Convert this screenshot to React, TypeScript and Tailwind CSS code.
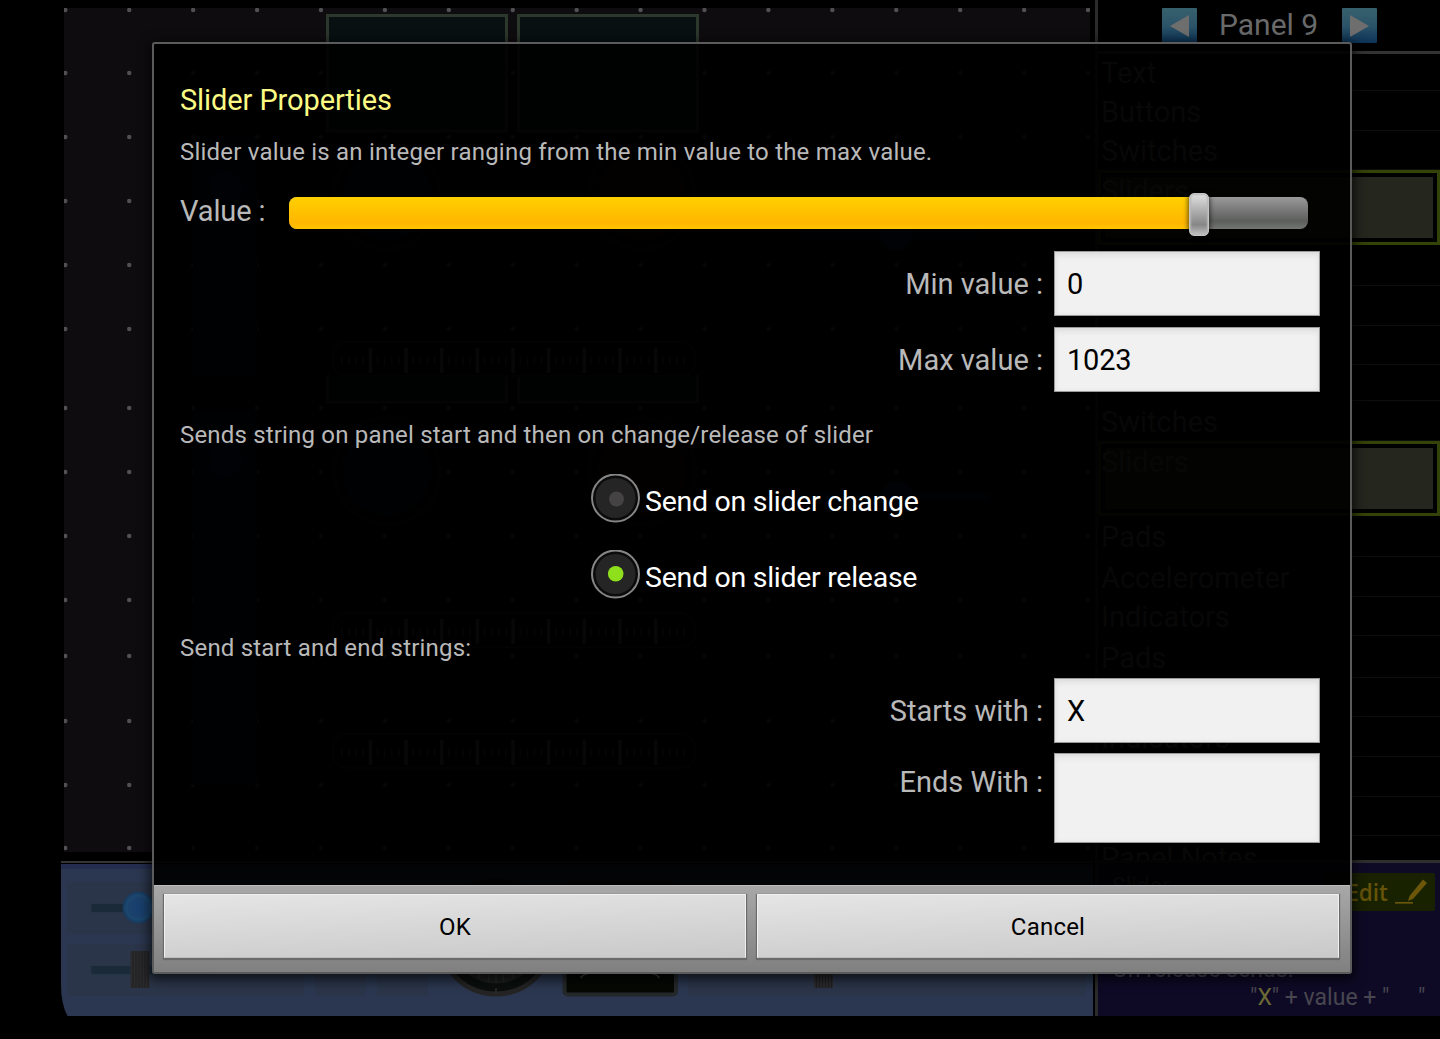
import React from "react";

const DOT_ROWS = [10, 73, 137, 201, 265, 329, 408, 472, 536, 600, 656, 721, 785, 848];
const DOT_COLS = Array.from({ length: 17 }, (_, i) => 65.3 + i * 63.92);

function Ruler({ y }: { y: number }) {
  return (
    <g>
      <rect x="333" y={y} width="362" height="34" rx="14" fill="#080808" stroke="#1c1c1c" strokeWidth="2" />
      {Array.from({ length: 49 }, (_, i) => i + 1).map((i) => {
        const tall = i % 5 === 0;
        return (
          <rect
            key={i}
            x={334.8 + i * 7.13 - (tall ? 1.7 : 0.8)}
            y={y + (tall ? 6 : 15)}
            width={tall ? 3.4 : 1.6}
            height={tall ? 25 : 8}
            fill={tall ? "#606060" : "#464646"}
          />
        );
      })}
    </g>
  );
}

function Knob({ cx, cy, color }: { cx: number; cy: number; color: string }) {
  return (
    <g>
      <circle cx={cx} cy={cy} r="53" fill="#0c0c0c" stroke="#181814" strokeWidth="3" />
      <circle cx={cx} cy={cy} r="44" fill={color} />
    </g>
  );
}

function PanelCanvas() {
  return (
    <svg className="block h-[844px] w-[1026px]" viewBox="64 8 1026 844">
      <rect x="64" y="8" width="1026" height="844" fill="#0f0c10" />
      {DOT_ROWS.map((y) => DOT_COLS.map((x) => <circle key={`${x}-${y}`} cx={x} cy={y} r="2.2" fill="#505052" />))}
      <g fill="#081012" stroke="#2d382d" strokeWidth="3">
        <rect x="327.5" y="15.5" width="179" height="115.5" />
        <rect x="518.5" y="15.5" width="179" height="115.5" />
        <rect x="327.5" y="360" width="179" height="42" />
        <rect x="518.5" y="360" width="179" height="42" />
      </g>
      <rect x="325" y="340" width="376" height="35" fill="#0a0a0a" />
      <g fill="#0c1624">
        <rect x="193" y="138" width="64" height="237" />
        <rect x="193" y="410" width="64" height="375" />
      </g>
      <g fill="#0a1826">
        <rect x="221" y="170" width="9" height="193" />
        <rect x="221" y="440" width="9" height="320" />
        <rect x="799" y="230" width="180" height="9" />
        <rect x="799" y="492" width="190" height="9" />
      </g>
      <g fill="#0c2440">
        <circle cx="226" cy="188" r="16" />
        <circle cx="226" cy="460" r="16" />
        <circle cx="896" cy="234" r="16" />
        <circle cx="897" cy="497" r="16" />
      </g>
      <Knob cx={387} cy={196} color="#081626" />
      <Knob cx={642} cy={196} color="#300a06" />
      <Knob cx={387} cy={471} color="#081626" />
      <Knob cx={642} cy={471} color="#300a06" />
      <Ruler y={342} />
      <Ruler y={613} />
      <Ruler y={734} />
    </svg>
  );
}

function WidgetTray() {
  return (
    <div className="h-[156px] w-[1032px] overflow-hidden">
      <svg className="block h-[156px] w-[1032px]" viewBox="61 860 1032 156">
        <defs>
          <radialGradient id="ball">
            <stop offset="0" stopColor="#183f70" />
            <stop offset="0.6" stopColor="#1b416c" />
            <stop offset="0.75" stopColor="#1c4870" />
            <stop offset="1" stopColor="#17385c" />
          </radialGradient>
        </defs>
        <path d="M61 864H1093V1016H67.500Q61 1004 61 985Z" fill="#2b3750" />
        <rect x="61" y="861" width="1032" height="2" fill="#353535" />
        <rect x="61" y="864" width="1032" height="5" fill="#252d4f" />
        <g fill="#2b3549">
          <rect x="67" y="882" width="237" height="52" />
          <rect x="67" y="944" width="237" height="52" />
          <rect x="315" y="944" width="51" height="52" />
          <rect x="377" y="944" width="51" height="52" />
          <rect x="688" y="944" width="398" height="52" />
        </g>
        <rect x="91" y="903.500" width="120" height="9" fill="#1b2a38" stroke="#253545" />
        <rect x="91" y="965.500" width="120" height="9" fill="#1b2a38" stroke="#253545" />
        <circle cx="138.500" cy="907.500" r="16" fill="url(#ball)" />
        {[130.5, 814].map((x) => (
          <g key={x}>
            <rect x={x} y="951" width="19" height="37" fill="#2b2b2e" />
            {[2, 5, 8, 11, 14, 17].map((d) => (
              <rect key={d} x={x + d} y="951" width="1" height="37" fill="#202022" />
            ))}
          </g>
        ))}
        <circle cx="496" cy="937.500" r="56.500" fill="#0a0f0e" stroke="#242424" strokeWidth="5" />
        <circle cx="496" cy="937.500" r="46" fill="#1b1c1c" />
        <path d="M496 988v5" stroke="#3a3a3a" />
        <path d="M482 970l-4 9M490 972l-2 10M496 973v10M502 972l2 10M510 970l4 9" stroke="#2c2c2c" />
        <rect x="564.500" y="884" width="111.500" height="110.500" rx="3" fill="#050803" stroke="#25282a" strokeWidth="4" />
        <path d="M580.500 978q3-4 8-4.500M659.500 978q-3-4-8-4.500" fill="none" stroke="#3a3e3c" strokeWidth="1.500" />
      </svg>
    </div>
  );
}

function ListRow({ label, className }: { label: string; className: string }) {
  return (
    <div
      className={`flex shrink-0 items-center border-b border-[#0e0e0e] pt-[3px] pl-[3px] text-[29px] leading-none text-[#5a5a5a] ${className}`}
    >
      {label}
    </div>
  );
}

function SelectedRow({ label }: { label: string }) {
  return (
    <div className="h-[75px] shrink-0 border-[3px] border-[#344307] bg-black p-[4px]">
      <div className="h-full bg-[#25271f] text-[29px] leading-[28px] text-[#5a5a5a]">
        <span className="-ml-[4px]">{label}</span>
      </div>
    </div>
  );
}

function Arrow({ left }: { left?: boolean }) {
  return (
    <div className="flex h-[35px] w-[35px] items-center justify-center rounded-[1px] bg-linear-to-b from-[#37606d] via-[#2c5469] to-[#0c3356]">
      <svg viewBox="0 0 19 22" className={left ? "h-[22px] w-[19px] rotate-180" : "h-[22px] w-[19px]"}>
        <path d="M0 0L19 11L0 22Z" fill="#6e6e6e" />
      </svg>
    </div>
  );
}

function Sidebar() {
  return (
    <div className="flex h-[1016px] w-[345px] shrink-0 flex-col border-l-[3px] border-[#2b2b2b]">
      <div className="flex h-[54px] shrink-0 items-start gap-[22px] border-b-[3px] border-[#333] pt-[8px] pl-[64px]">
        <Arrow left />
        <div className="w-[101px] text-[30px] leading-[34px] whitespace-nowrap text-[#6a6a6a]">Panel 9</div>
        <Arrow />
      </div>
      <div className="flex h-[806px] shrink-0 flex-col overflow-hidden">
        <ListRow label="Text" className="h-[37px]" />
        <ListRow label="Buttons" className="h-[40px]" />
        <ListRow label="Switches" className="h-[39px]" />
        <SelectedRow label="Sliders" />
        <ListRow label="" className="h-[41px]" />
        <ListRow label="" className="h-[40px]" />
        <ListRow label="" className="h-[39px]" />
        <ListRow label="" className="h-[36px]" />
        <ListRow label="Switches" className="h-[40px]" />
        <SelectedRow label="Sliders" />
        <ListRow label="Pads" className="h-[41px]" />
        <ListRow label="Accelerometer" className="h-[40px]" />
        <ListRow label="Indicators" className="h-[39px]" />
        <ListRow label="Pads" className="h-[42px]" />
        <ListRow label="" className="h-[39px]" />
        <ListRow label="Indicators" className="h-[40px]" />
        <ListRow label="" className="h-[40px]" />
        <ListRow label="" className="h-[39px]" />
        <ListRow label="Panel Notes" className="h-[42px]" />
      </div>
      <div className="flex min-h-0 flex-1 flex-col border-t-[3px] border-[#2e2e2e] bg-[#0e0a26]">
        <div className="flex justify-between pt-[10px] pr-[5px] pl-[14px]">
          <div className="text-[23px] leading-[28px] text-[#5a5a5a]">Slider</div>
          <div className="flex h-[38px] w-[110px] items-center gap-[7px] rounded-[2px] bg-[#182200] pl-[19px] font-['Open_Sans',sans-serif] text-[22.5px] leading-[38px] font-semibold text-[#665309]">
            <span className="w-[44px] pt-[2px] text-right">Edit</span>
            <svg viewBox="0 0 32 26" className="h-[26px] w-[32px]" fill="#6b5609">
              <rect x="0" y="23" width="18" height="1.600" />
              <path d="M28 0.500L32 4L18 20L13 22L14.500 17Z" />
            </svg>
          </div>
        </div>
        <div className="mt-[46px] pl-[14px] text-[23px] leading-[26px] text-[#48485a]">On release sends:</div>
        <div className="flex pt-[1px] pl-[152px] text-[23px] leading-[28px] whitespace-pre text-[#48464f]">
          "<span className="text-[#6c6a35]">X</span>" + value + "{"     "}"
        </div>
      </div>
    </div>
  );
}

function Field({ label, value, tall }: { label: string; value: string; tall?: boolean }) {
  return (
    <div className={tall ? "flex h-[90px] items-start" : "flex h-[65px] items-center"}>
      <div
        className={
          tall
            ? "flex-1 pt-[12px] pr-[11px] text-right text-[29px] leading-[34px]"
            : "flex-1 pt-[1px] pr-[11px] text-right text-[29px] leading-[34px]"
        }
      >
        {label}
      </div>
      <div className="flex h-full w-[266px] items-center border border-[#9a9a9a] bg-[#f1f1f1] pt-[2px] pl-[12px] text-[29px] tracking-[-0.2px] text-black shadow-[inset_0_5px_6px_-2px_#dcdcdc,inset_0_0_4px_#e2e2e2]">
        {value}
      </div>
    </div>
  );
}

function Radio({ label, checked }: { label: string; checked?: boolean }) {
  return (
    <div className="flex h-[50px] items-center pl-[411px]">
      <svg viewBox="0 0 50 50" className="h-[50px] w-[50px]">
        <circle cx="24.500" cy="24" r="23.500" fill="#0b0b0b" stroke="#868686" strokeWidth="2" />
        <circle cx="24.500" cy="24" r="20" fill="#262525" />
        {checked ? (
          <circle cx="24.700" cy="23.800" r="7.800" fill="#8fe01c" />
        ) : (
          <circle cx="25.500" cy="25" r="7.500" fill="#454343" />
        )}
      </svg>
      <div className="pt-[5px] pl-[4px] text-[28.5px] leading-[34px] tracking-[-0.28px] text-white">{label}</div>
    </div>
  );
}

function DialogButton({ label }: { label: string }) {
  return (
    <button className="h-[64px] w-[582px] border border-[#f0f0f0] border-b-[#bdbdbd] bg-linear-[178deg] from-[#e5e5e5] to-[#c9c9c9] pt-[2px] text-[24px] leading-none tracking-[0.2px] text-black shadow-[0_1px_1px_1px_#6a6a6a]">
      {label}
    </button>
  );
}

function Dialog() {
  return (
    <div className="absolute top-[42px] left-[152px] flex h-[932px] w-[1200px] flex-col rounded-[3px] border-2 border-[#5b5b5b] bg-black/92 text-[#b9b9b9] shadow-[0_3px_12px_3px_rgba(0,0,0,0.65)]">
      <div className="flex flex-1 flex-col pt-[36px] pr-[30px] pl-[26px]">
        <h1 className="text-[29px] leading-[40px] tracking-[-0.1px] text-[#fbfb84]">Slider Properties</h1>
        <p className="mt-[12px] text-[24px] leading-[40px] tracking-[0.21px]">
          Slider value is an integer ranging from the min value to the max value.
        </p>
        <div className="mt-[20px] flex h-[42px] items-center">
          <div className="w-[109px] pb-[4px] text-[29px] leading-[34px] tracking-[-0.1px]">Value :</div>
          <div className="flex h-[32px] w-[1019px] items-center rounded-[8px] bg-linear-to-b from-[#9b9a9b] via-[#5c5e5c] via-75% to-[#747674]">
            <div className="h-[32px] w-[900px] rounded-l-[8px] bg-linear-to-b from-[#ffd000] via-[#ffb600] via-80% to-[#ffc400]" />
            <div className="mt-[2px] h-[43px] w-[20px] shrink-0 rounded-[5px] border border-[#c4c4c4] bg-linear-to-b from-[#e2e2e2] via-[#868686] via-75% to-[#c4c4c4] shadow-[0_0_5px_1px_rgba(0,0,0,0.6),inset_0_0_2px_1px_#b8b8b8]" />
          </div>
        </div>
        <div className="mt-[17px] flex flex-col gap-[11px]">
          <Field label="Min value :" value="0" />
          <Field label="Max value :" value="1023" />
        </div>
        <p className="mt-[23px] text-[24px] leading-[40px] tracking-[0.18px]">
          Sends string on panel start and then on change/release of slider
        </p>
        <div className="mt-[19px] flex flex-col gap-[26px]">
          <Radio label="Send on slider change" />
          <Radio label="Send on slider release" checked />
        </div>
        <p className="mt-[28px] text-[24px] leading-[40px] tracking-[0.2px]">Send start and end strings:</p>
        <div className="mt-[10px] flex flex-col gap-[10px]">
          <Field label="Starts with :" value="X" />
          <Field label="Ends With :" value="" tall />
        </div>
      </div>
      <div className="flex h-[87px] shrink-0 justify-between border-t border-[#bdbdbd] bg-linear-to-b from-[#a8a8a8] to-[#808080] pt-[8px] pr-[11px] pl-[10px]">
        <DialogButton label="OK" />
        <DialogButton label="Cancel" />
      </div>
    </div>
  );
}

export default function App() {
  return (
    <div className="relative h-[1039px] w-[1440px] overflow-hidden bg-black font-[Roboto,sans-serif]">
      <div className="flex pl-[61px]">
        <div className="flex w-[1034px] shrink-0 flex-col">
          <div className="h-[860px] pt-[8px] pl-[3px]">
            <PanelCanvas />
          </div>
          <WidgetTray />
        </div>
        <Sidebar />
      </div>
      <Dialog />
    </div>
  );
}
